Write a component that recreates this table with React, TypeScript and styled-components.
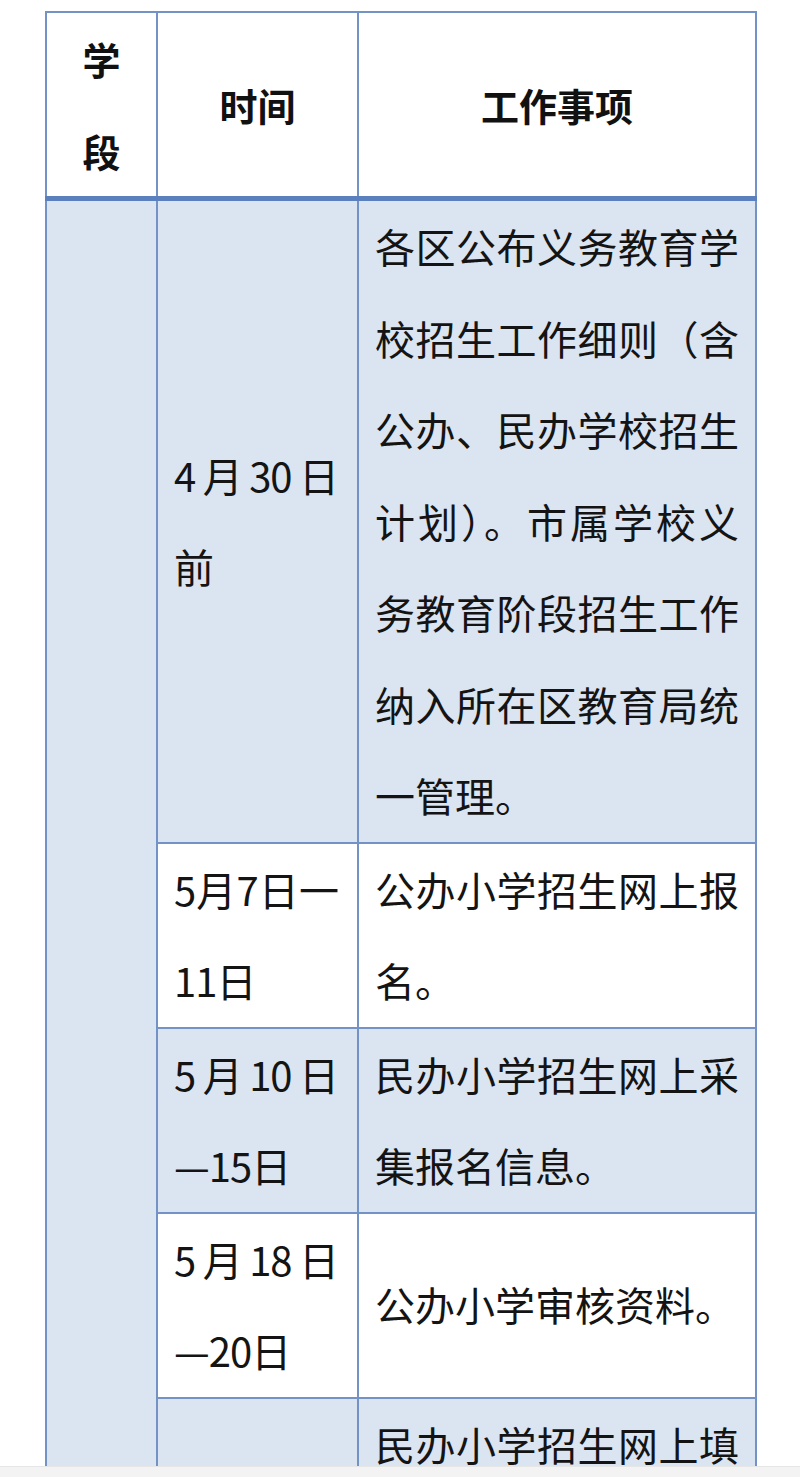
import React from "react"
import styled, { createGlobalStyle } from "styled-components"

const GlobalStyle = createGlobalStyle`
  html, body {
    margin: 0;
    padding: 0;
    background: #ffffff;
  }
  body {
    font-family: "Noto Sans CJK SC", "Noto Sans", sans-serif;
    color: #141414;
  }
`

const Screen = styled.div`
  width: 800px;
  height: 1466px;
  overflow: hidden;
  padding-top: 11px;
  box-sizing: border-box;
`

const Table = styled.table`
  margin-left: 45px;
  width: 710px;
  border-collapse: collapse;
  table-layout: fixed;
`

const HeadCell = styled.th`
  height: 180px;
  padding: 0;
  border: 2px solid #7393c6;
  border-bottom: 5px solid #5a80bd;
  background: #ffffff;
  font-size: 38px;
  font-weight: 700;
  line-height: 91.5px;
  text-align: center;
  vertical-align: middle;
  color: #111111;
`

// $time: the narrow date column, a touch tighter so "5月7日一" stays on one line
const Cell = styled.td<{ $shaded?: boolean; $time?: boolean }>`
  padding: ${(p) => (p.$time ? "0 19px 0 16px" : "0 16px 0 16px")};
  border: 2px solid #7393c6;
  background: ${(p) => (p.$shaded ? "#dbe4f1" : "#ffffff")};
  font-size: 40px;
  line-height: 91.5px;
  letter-spacing: ${(p) => (p.$time ? "-1px" : "0")};
  text-align: justify;
  vertical-align: middle;
  word-break: break-all;
  color: #141414;
`

const StageCell = styled.td`
  border: 2px solid #7393c6;
  background: #dbe4f1;
  padding: 0;
`

const NavStrip = styled.div`
  height: 11px;
  background: #f3f3f3;
  border-top: 1px solid #e6e6e6;
`

const rows = [
  {
    time: "4月30日前",
    work: "各区公布义务教育学校招生工作细则（含公办、民办学校招生计划）。市属学校义务教育阶段招生工作纳入所在区教育局统一管理。",
    shaded: true,
  },
  { time: "5月7日一11日", work: "公办小学招生网上报名。", shaded: false },
  { time: "5月10日—15日", work: "民办小学招生网上采集报名信息。", shaded: true },
  { time: "5月18日—20日", work: "公办小学审核资料。", shaded: false },
  {
    time: "5月21日—23日",
    work: "民办小学招生网上填报志愿，民办小学进行电脑随机录取。",
    shaded: true,
  },
]

const App: React.FC = () => (
  <>
    <GlobalStyle />
    <Screen>
      <Table>
        <colgroup>
          <col style={{ width: 111 }} />
          <col style={{ width: 201 }} />
          <col style={{ width: 398 }} />
        </colgroup>
        <thead>
          <tr>
            <HeadCell>
              学<br />段
            </HeadCell>
            <HeadCell>时间</HeadCell>
            <HeadCell>工作事项</HeadCell>
          </tr>
        </thead>
        <tbody>
          {rows.map((row, i) => (
            <tr key={row.time}>
              {i === 0 && <StageCell rowSpan={rows.length} />}
              <Cell $shaded={row.shaded} $time>
                {row.time}
              </Cell>
              <Cell $shaded={row.shaded}>{row.work}</Cell>
            </tr>
          ))}
        </tbody>
      </Table>
    </Screen>
    <NavStrip />
  </>
)

export default App
